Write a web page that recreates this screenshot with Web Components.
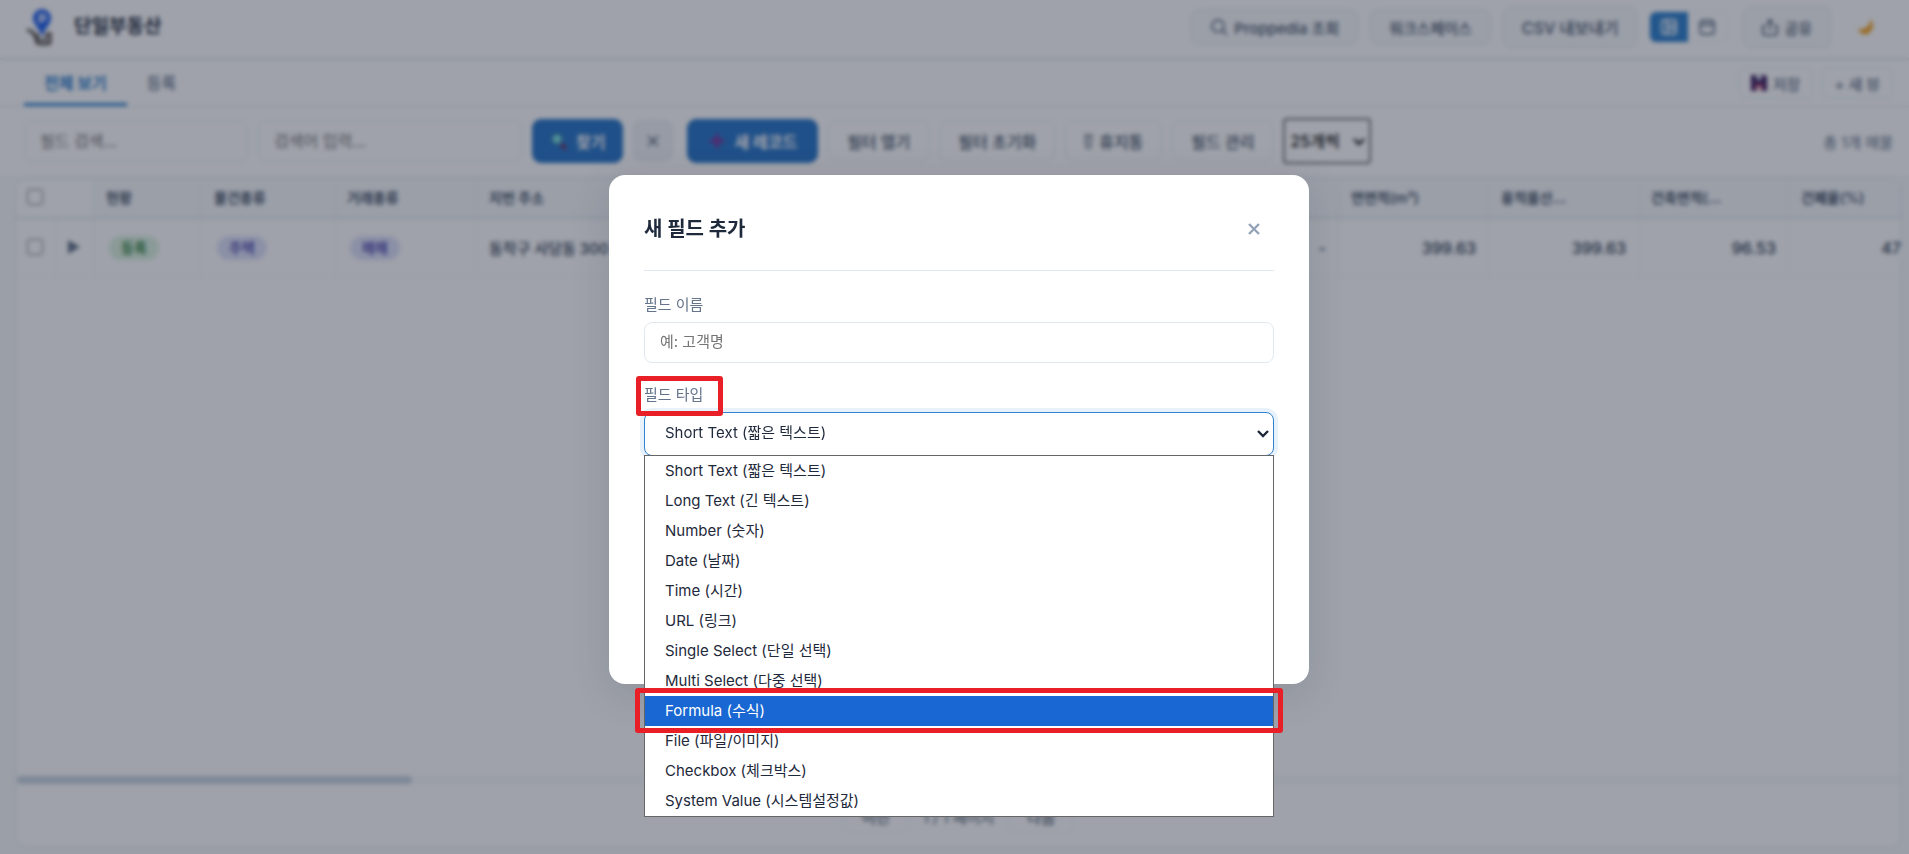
<!DOCTYPE html>
<html lang="ko">
<head>
<meta charset="utf-8">
<meta name="viewport" content="width=device-width, initial-scale=1">
<title>단일부동산</title>
<style>
  :root {
    --primary: #3182ce;
    --line: #e2e8f0;
    --soft: #f8fafc;
    --ink: #1e293b;
    --muted: #64748b;
  }
  html, body { height: 100%; margin: 0; }
  body {
    font-family: Inter, "Noto Sans CJK KR", sans-serif;
    font-size: 15px;
    color: var(--ink);
    background: var(--soft);
    overflow: hidden;
  }
</style>
</head>
<body>
<estate-app></estate-app>

<script>
const base = `
  *, *::before, *::after { box-sizing: border-box; }
  button, input, select { font: inherit; color: inherit; margin: 0; }
  button { cursor: pointer; }
  svg { display: block; flex: none; }
`;

function define(name, css, html) {
  const tpl = document.createElement('template');
  tpl.innerHTML = `<style>${base}${css}</style>${html}`;
  customElements.define(name, class extends HTMLElement {
    connectedCallback() {
      if (this.shadowRoot) return;
      this.attachShadow({ mode: 'open' }).append(tpl.content.cloneNode(true));
    }
  });
}

const chevron = `<svg class="chevron" width="12" height="8" viewBox="0 0 12 8" fill="none" stroke="currentColor" stroke-width="2.4"><path d="M1 1l5 5 5-5"/></svg>`;

// buttons
define('ui-button', `
  :host { display: block; }
  button {
    display: flex; align-items: center; justify-content: center; gap: var(--gap, 6px);
    width: 100%; height: var(--h, 42px); padding: 0 var(--px, 18px);
    background: var(--bg, #fff); color: var(--fg, #475569);
    border: 1px solid var(--bd, #e2e8f0); border-radius: 9px;
    font-weight: var(--fw, 500); white-space: nowrap;
  }
`, `<button type="button"><slot></slot></button>`);

define('status-pill', `
  :host { display: inline-block; }
  span {
    display: block; padding: 0 12px; line-height: 24px; border-radius: 12px;
    font-size: 14px; font-weight: 600;
    background: var(--pill-bg, #e0e2fa); color: var(--pill-fg, #5a57b4);
  }
`, `<span><slot></slot></span>`);

// red outline laid over whatever it is placed in
define('callout-box', `
  :host {
    position: absolute; z-index: 3; pointer-events: none;
    border: 5px solid #e81f27; border-radius: 3px;
  }
`, ``);

define('app-header', `
  :host { display: block; background: #fff; border-bottom: 2px solid var(--line); }
  header { display: flex; align-items: center; height: 58px; padding: 0 16px 4px 24px; gap: 12px; }
  h1 { margin: 0; font-size: 19px; line-height: 24px; font-weight: 700; flex: 1; padding-left: 4px; }
  ui-button { --bg: #f8fafc; --bd: #e2e8f0; }
  .small { --h: 36px; }
  .csv { font-size: 16px; }
  .toggle { display: flex; border: 1px solid #f1f5f9; border-radius: 7px; overflow: hidden; margin-right: 4px; }
  .toggle button { width: 38px; height: 30px; border: 0; padding: 0; background: #fff; color: var(--muted); display: flex; align-items: center; justify-content: center; }
  .toggle .on { background: var(--primary); color: #fff; }
  .theme { width: 44px; height: 40px; margin-right: 6px; border: 0; padding: 0; background: none; display: flex; align-items: center; justify-content: center; }
`, `
  <header>
    <svg width="34" height="38" viewBox="0 0 34 38">
      <path d="M3 22q6 1 8 5l2 8q8 2 13 0V24" fill="none" stroke="#57534e" stroke-width="3"/>
      <path d="M8 27h6v5h8v-6h5" fill="none" stroke="#57534e" stroke-width="2"/>
      <path d="M18 1a9 9 0 0 0-9 9c0 6 6 10 9 19 3-9 9-13 9-19a9 9 0 0 0-9-9z" fill="#2563eb"/>
      <path d="M16 15V7h4a3 3 0 0 1 0 5h-3" fill="none" stroke="#fff" stroke-width="2"/>
    </svg>
    <h1>단일부동산</h1>
    <ui-button class="small">
      <svg width="18" height="18" viewBox="0 0 18 18" fill="none" stroke="currentColor" stroke-width="1.5"><circle cx="8" cy="8" r="6"/><path d="M12 12l5 5"/></svg>
      Proppedia 조회
    </ui-button>
    <ui-button class="small">워크스페이스</ui-button>
    <ui-button class="csv">CSV 내보내기</ui-button>
    <div class="toggle">
      <button class="on" type="button" aria-label="표 보기">
        <svg width="18" height="18" viewBox="0 0 18 18" fill="none" stroke="currentColor" stroke-width="1.8"><rect x="2" y="2" width="14" height="14" rx="2"/><path d="M7 2v14M7 7h9M7 11h9"/></svg>
      </button>
      <button type="button" aria-label="달력 보기">
        <svg width="18" height="18" viewBox="0 0 18 18" fill="none" stroke="currentColor" stroke-width="1.8"><rect x="2" y="3" width="14" height="13" rx="2"/><path d="M2 7h14M6 1v3M12 1v3"/></svg>
      </button>
    </div>
    <ui-button>
      <svg width="16" height="18" viewBox="0 0 16 18" fill="none" stroke="currentColor" stroke-width="1.6"><path d="M4 8H1v7q0 2 2 2h10q2 0 2-2V8h-3M8 12V2M5 5l3-3 3 3"/></svg>
      공유
    </ui-button>
    <button class="theme" type="button" aria-label="어두운 화면">
      <svg width="18" height="18" viewBox="0 0 18 18"><path d="M14 1c1 6-4 11-12 10 2 5 7 7 11 4 5-4 5-10 1-14z" fill="#f5a524"/></svg>
    </button>
  </header>
`);

define('view-tabs', `
  :host { display: block; background: #fff; border-bottom: 1px solid var(--line); }
  nav { display: flex; align-items: center; height: 46px; padding: 0 16px 0 24px; }
  a { display: flex; align-items: center; height: 46px; padding: 0 20px; font-size: 16px; font-weight: 500; text-decoration: none; color: var(--muted); border-bottom: 3px solid transparent; }
  a.on { color: var(--primary); font-weight: 700; border-color: var(--primary); }
  .end { display: flex; gap: 8px; margin-left: auto; --h: 32px; --px: 12px; --fg: #64748b; --bd: #e8edf3; }
`, `
  <nav>
    <a class="on" href="#all">전체 보기</a>
    <a href="#registered">등록</a>
    <div class="end">
      <ui-button>
        <svg width="16" height="16" viewBox="0 0 16 16"><path d="M0 0h14l2 2v14H0z" fill="#3f1f60"/><path d="M5 0h6v5H5z" fill="#c4c9dc"/><path d="M4 16v-7h8v7z" fill="#b0507a"/><path d="M6 12h4v4H6z" fill="#f1dce4"/></svg>
        저장
      </ui-button>
      <ui-button>+ 새 뷰</ui-button>
    </div>
  </nav>
`);

define('search-bar', `
  :host { display: block; background: #fff; }
  .bar { display: flex; align-items: center; gap: 10px; height: 68px; padding: 0 16px 0 24px; font-size: 16px; --bd: #e8edf3; }
  input { height: 42px; padding: 0 15px; border: 1px solid #e8edf3; border-radius: 9px; background: #fff; }
  input::placeholder { color: #757575; }
  .field { width: 224px; }
  .word { width: 264px; }
  .blue { --bg: #2b77c8; --bd: #2b77c8; --fg: #fff; --fw: 700; --h: 44px; --px: 20px; --gap: 8px; }
  .find { --px: 17px; }
  .clear { --bg: #f1f4f8; --px: 13px; margin-right: 4px; }
  .size { position: relative; }
  .size select { display: block; appearance: none; height: 46px; width: 88px; padding: 0 5px; border: 2px solid #767676; border-radius: 4px; background: #fff; color: #111; font-weight: 500; }
  .size .chevron { position: absolute; right: 6px; top: 20px; color: #111; pointer-events: none; }
  .total { margin-left: auto; color: var(--muted); font-size: 15px; }
`, `
  <div class="bar">
    <input class="field" type="text" aria-label="필드 검색" placeholder="필드 검색...">
    <input class="word" type="text" aria-label="검색어 입력" placeholder="검색어 입력...">
    <ui-button class="blue find">
      <svg width="18" height="18" viewBox="0 0 18 18"><path d="M11 12l5 5" stroke="#8a2a4a" stroke-width="3"/><circle cx="7" cy="7" r="5" fill="#7fe0e0" stroke="#2f7f9f"/></svg>
      찾기
    </ui-button>
    <ui-button class="clear">
      <svg width="12" height="12" viewBox="0 0 12 12" stroke="currentColor" stroke-width="1.5"><path d="M1 1l10 10M11 1L1 11"/></svg>
    </ui-button>
    <ui-button class="blue">
      <svg width="18" height="18" viewBox="0 0 18 18" stroke="#8f2f98" stroke-width="3"><path d="M9 2v14M2 9h14"/></svg>
      새 레코드
    </ui-button>
    <ui-button>필터 열기</ui-button>
    <ui-button>필터 초기화</ui-button>
    <ui-button>
      <svg width="9" height="16" viewBox="0 0 9 16" fill="none" stroke="currentColor"><path d="M1 4h7l-1 11H2zM0 2h9M4 6v7"/></svg>
      휴지통
    </ui-button>
    <ui-button>필드 관리</ui-button>
    <div class="size">
      <select aria-label="페이지 크기"><option>25개씩</option></select>
      ${chevron}
    </div>
    <span class="total">총 1개 매물</span>
  </div>
`);

define('record-table', `
  :host { display: flex; flex: 1; min-height: 0; padding: 3px 7px 6px 15px; }
  section { display: flex; flex-direction: column; flex: 1; min-width: 0; background: #fff; border: 1px solid var(--line); border-radius: 12px; overflow: hidden; }
  .scroll { flex: 1; overflow: hidden; }
  table { width: 100%; border-collapse: separate; border-spacing: 0; table-layout: fixed; }
  th, td { padding: 0 12px; text-align: left; white-space: nowrap; overflow: hidden; border-right: 1px solid #eef2f7; }
  th { height: 40px; padding-bottom: 2px; font-size: 14px; font-weight: 600; color: #475569; background: var(--soft); border-bottom: 2px solid var(--line); }
  td { height: 58px; font-weight: 500; color: #334155; border-bottom: 1px solid #f1f5f9; }
  th.pick { background: #fff; }
  .pick { padding-left: 11px; padding-right: 11px; }
  td.pick { padding-bottom: 2px; }
  td.num { text-align: right; font-size: 16px; }
  td.last { padding-right: 0; border-right: 0; }
  td.pill { padding-left: 15px; }
  input { display: block; width: 16px; height: 16px; margin: 0; }
  .open { border: 0; padding: 0; background: none; color: #64748b; display: block; }
  status-pill.ok { --pill-bg: #dcf3e0; --pill-fg: #3f8a4c; }
  .track { height: 10px; padding: 1px; background: var(--soft); }
  .thumb { width: 21%; height: 8px; border-radius: 4px; background: #cbd5e1; }
  footer { display: flex; align-items: center; justify-content: center; gap: 14px; height: 62px; color: #475569; --h: 36px; --bd: #eef2f7; }
`, `
  <section>
    <div class="scroll">
      <table>
        <colgroup>
          <col style="width:40px"><col style="width:38px"><col style="width:108px"><col style="width:133px"><col style="width:142px"><col>
          <col style="width:150px"><col style="width:150px"><col style="width:150px"><col style="width:150px"><col style="width:112px">
        </colgroup>
        <thead>
          <tr>
            <th class="pick" colspan="2"><input type="checkbox" aria-label="모두 선택"></th>
            <th>현황</th><th>물건종류</th><th>거래종류</th><th>지번 주소</th><th></th>
            <th>연면적(m²)</th><th>용적률산...</th><th>건축면적(...</th><th>건폐율(%)</th>
          </tr>
        </thead>
        <tbody>
          <tr>
            <td class="pick"><input type="checkbox" aria-label="행 선택"></td>
            <td class="pick"><button class="open" type="button" aria-label="열기"><svg width="14" height="16" viewBox="0 0 14 16"><path d="M1 1l12 7-12 7z" fill="currentColor"/></svg></button></td>
            <td class="pill"><status-pill class="ok">등록</status-pill></td>
            <td class="pill"><status-pill>주택</status-pill></td>
            <td class="pill"><status-pill>매매</status-pill></td>
            <td>동작구 사당동 300</td>
            <td class="num">-</td>
            <td class="num">399.63</td><td class="num">399.63</td><td class="num">96.53</td><td class="num last">47</td>
          </tr>
        </tbody>
      </table>
    </div>
    <div class="track"><div class="thumb"></div></div>
    <footer>
      <ui-button>이전</ui-button>
      <span>1 / 1 페이지</span>
      <ui-button>다음</ui-button>
    </footer>
  </section>
`);

const fieldTypes = [
  'Short Text (짧은 텍스트)', 'Long Text (긴 텍스트)', 'Number (숫자)', 'Date (날짜)',
  'Time (시간)', 'URL (링크)', 'Single Select (단일 선택)', 'Multi Select (다중 선택)',
  'Formula (수식)', 'File (파일/이미지)', 'Checkbox (체크박스)', 'System Value (시스템설정값)'
];
const highlighted = 8;

define('type-select', `
  :host { display: block; position: relative; }
  label { display: block; height: 29px; line-height: 24px; color: var(--muted); }
  .box { position: relative; }
  select {
    display: block; appearance: none; width: 100%; height: 44px; padding: 0 20px 2px;
    border: 1px solid var(--primary); border-radius: 8px; background: #fff; color: var(--ink);
    box-shadow: 0 0 0 4px #e8f2fc; outline: 0;
  }
  .chevron { position: absolute; top: 18px; right: 5px; pointer-events: none; }
  ul {
    position: absolute; z-index: 2; top: 43px; left: 0; right: 0;
    margin: 0; padding: 0; list-style: none; background: #fff; border: 1px solid #666;
  }
  li { position: relative; padding: 0 20px; line-height: 30px; white-space: nowrap; }
  li.on { background: #1967d2; color: #fff; }
  li callout-box { inset: -8px -10px -7px; }
  .label-mark { top: -7px; left: -8px; width: 87px; height: 40px; }
`, `
  <label for="type">필드 타입</label>
  <div class="box">
    <select id="type">${fieldTypes.map(t => `<option>${t}</option>`).join('')}</select>
    ${chevron}
    <ul role="listbox" aria-label="필드 타입">
      ${fieldTypes.map((t, i) => i === highlighted
        ? `<li class="on" role="option" aria-selected="true">${t}<callout-box></callout-box></li>`
        : `<li role="option">${t}</li>`).join('')}
    </ul>
  </div>
  <callout-box class="label-mark"></callout-box>
`);

define('field-modal', `
  :host {
    position: fixed; inset: 0; z-index: 10; display: flex; align-items: center; justify-content: center;
    padding: 4px 0 0 9px; background: rgba(15, 23, 42, .4); backdrop-filter: blur(2px);
  }
  .dialog {
    width: 700px; max-width: 100%; min-height: 509px; padding: 28px 35px; background: #fff;
    border-radius: 16px; box-shadow: 0 10px 40px rgba(15, 23, 42, .12);
  }
  .head { display: flex; align-items: center; justify-content: space-between; height: 68px; padding-bottom: 15px; border-bottom: 1px solid var(--line); }
  h2 { margin: 0; font-size: 20px; line-height: 28px; font-weight: 700; }
  .close { display: flex; align-items: center; justify-content: center; width: 40px; height: 40px; padding: 0; border: 0; background: none; color: #94a3b8; }
  form { padding-top: 22px; }
  .row { margin-bottom: 20px; }
  label { display: block; height: 29px; line-height: 24px; color: var(--muted); }
  input { display: block; width: 100%; height: 41px; padding: 0 15px 2px; border: 1px solid var(--line); border-radius: 8px; background: #fff; outline: 0; }
  input::placeholder { color: #757575; }
`, `
  <div class="dialog" role="dialog" aria-modal="true" aria-labelledby="title">
    <div class="head">
      <h2 id="title">새 필드 추가</h2>
      <button class="close" type="button" aria-label="닫기">
        <svg width="12" height="12" viewBox="0 0 12 12" stroke="currentColor" stroke-width="2.4"><path d="M1 1l10 10M11 1L1 11"/></svg>
      </button>
    </div>
    <form>
      <div class="row">
        <label for="name">필드 이름</label>
        <input id="name" type="text" placeholder="예: 고객명">
      </div>
      <type-select></type-select>
    </form>
  </div>
`);

define('estate-app', `
  :host { display: flex; flex-direction: column; height: 100vh; }
`, `
  <app-header></app-header>
  <view-tabs></view-tabs>
  <search-bar></search-bar>
  <record-table></record-table>
  <field-modal></field-modal>
`);
</script>
</body>
</html>
